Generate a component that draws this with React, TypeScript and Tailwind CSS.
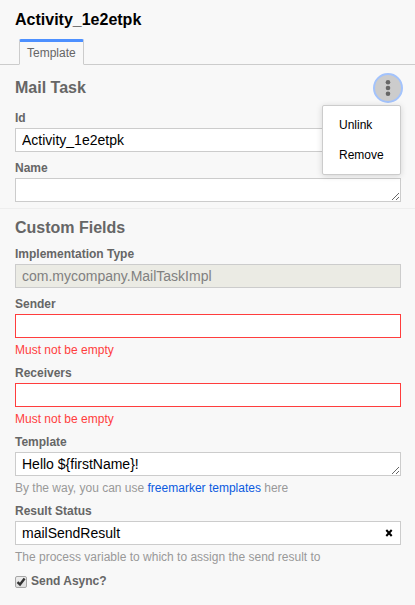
import React, { useState } from 'react';

const box =
  'block h-6 w-full rounded-none border px-1.5 text-sm leading-[22px] outline-none';

type FieldProps = {
  id: string;
  label: string;
  error?: string;
  hint?: React.ReactNode;
  children: React.ReactNode;
};

function Field({ id, label, error, hint, children }: FieldProps) {
  return (
    <div>
      <label htmlFor={id} className="mb-0.5 block text-xs leading-4 font-bold text-[#666666]">
        {label}
      </label>
      {children}
      {error && <p className="mt-[5px] text-xs leading-[14px] text-[#ff3d3d]">{error}</p>}
      {hint && <p className="mt-[5px] text-xs leading-[14px] text-[#999999]">{hint}</p>}
    </div>
  );
}

function TemplateMenu() {
  const [open, setOpen] = useState(true);
  return (
    <div className="relative">
      <button
        type="button"
        aria-label="Template options"
        aria-expanded={open}
        onClick={() => setOpen(!open)}
        className="-mr-0.5 flex size-[30px] items-center justify-center rounded-full border-2 border-[#a3c3fc] bg-[#cccccc] text-[#666666]"
      >
        <svg viewBox="0 0 6 18" className="h-[18px] w-1.5" fill="currentColor" aria-hidden="true">
          <circle cx="3" cy="3.3" r="2.3" />
          <circle cx="3" cy="9" r="2.3" />
          <circle cx="3" cy="14.7" r="2.3" />
        </svg>
      </button>
      {open && (
        <div className="absolute top-8 right-0 z-10 flex w-[79px] flex-col rounded-xs border border-[#cccccc] bg-white py-1 text-xs text-black shadow-[0_1px_6px_rgba(0,0,0,0.15)]">
          <button type="button" className="h-[30px] pl-4 text-left">
            Unlink
          </button>
          <button type="button" className="h-[30px] pl-4 text-left">
            Remove
          </button>
        </div>
      )}
    </div>
  );
}

export default function App() {
  const [result, setResult] = useState('mailSendResult');
  return (
    <main className="min-h-screen bg-[#f8f8f8] font-['Liberation_Sans',Arial,sans-serif]">
      <h1 className="px-[15px] pt-2 text-base leading-6 font-bold text-black">Activity_1e2etpk</h1>
      <nav className="mt-[7px] flex border-b border-[#cccccc] px-[19px]">
        <a
          href="#template"
          className="-mb-px h-[26px] rounded-t-xs border border-t-3 border-[#cccccc] border-t-[#4d90ff] border-b-[#f8f8f8] px-[7px] text-xs leading-[22px] text-[#666666]"
        >
          Template
        </a>
      </nav>

      <section className="border-b border-[#eeeeee] pr-3.5 pb-1.5 pl-[15px]">
        <header className="flex h-[45px] items-center justify-between">
          <h2 className="text-base leading-6 font-bold text-[#666666]">Mail Task</h2>
          <TemplateMenu />
        </header>
        <div className="flex flex-col gap-2">
          <Field id="id" label="Id">
            <input id="id" defaultValue="Activity_1e2etpk" className={`${box} border-[#cccccc] bg-white text-black`} />
          </Field>
          <Field id="name" label="Name">
            <textarea id="name" rows={1} className={`${box} resize-y overflow-hidden border-[#cccccc] bg-white text-black`} />
          </Field>
        </div>
      </section>

      <section className="pr-3.5 pl-[15px]">
        <h2 className="flex h-[37px] items-center text-base font-bold text-[#666666]">Custom Fields</h2>
        <div className="flex flex-col gap-2">
          <Field id="type" label="Implementation Type">
            <input
              id="type"
              disabled
              defaultValue="com.mycompany.MailTaskImpl"
              className={`${box} border-[#cccccc] bg-[#ebebe4] text-[#808080]`}
            />
          </Field>
          <Field id="sender" label="Sender" error="Must not be empty">
            <input id="sender" className={`${box} border-[#ff3d3d] bg-white text-black`} />
          </Field>
          <Field id="receivers" label="Receivers" error="Must not be empty">
            <input id="receivers" className={`${box} border-[#ff3d3d] bg-white text-black`} />
          </Field>
          <Field
            id="body"
            label="Template"
            hint={
              <>
                By the way, you can use{' '}
                <a href="#freemarker" className="text-[#0b5ae0]">
                  freemarker templates
                </a>{' '}
                here
              </>
            }
          >
            <textarea
              id="body"
              rows={1}
              defaultValue="Hello ${firstName}!"
              className={`${box} resize-y overflow-hidden border-[#cccccc] bg-white text-black`}
            />
          </Field>
          <Field id="result" label="Result Status" hint="The process variable to which to assign the send result to">
            <div className="relative">
              <input
                id="result"
                value={result}
                onChange={(e) => setResult(e.target.value)}
                className={`${box} border-[#cccccc] bg-white text-black`}
              />
              <button
                type="button"
                aria-label="Clear"
                onClick={() => setResult('')}
                className="absolute inset-y-0 right-2 flex items-center"
              >
                <svg viewBox="0 0 8 8" className="size-2" fill="none" stroke="black" strokeWidth="2" aria-hidden="true">
                  <path d="M1.3 1 6.7 7M6.7 1 1.3 7" />
                </svg>
              </button>
            </div>
          </Field>
          <label className="flex items-start gap-1 pt-px text-xs leading-4 font-bold text-[#666666]">
            <span className="relative mt-[3px] size-3">
              <input
                type="checkbox"
                defaultChecked
                className="peer block size-3 appearance-none rounded-xs border border-[#a6a6a6] bg-linear-to-b from-[#ededed] to-[#dedede]"
              />
              <svg
                viewBox="0 0 12 12"
                className="pointer-events-none absolute inset-0 hidden size-3 peer-checked:block"
                fill="none"
                stroke="#333333"
                strokeWidth="2.4"
                aria-hidden="true"
              >
                <path d="M2.5 6.2 5 8.5 9.6 2.5" />
              </svg>
            </span>
            Send Async?
          </label>
        </div>
      </section>
    </main>
  );
}
